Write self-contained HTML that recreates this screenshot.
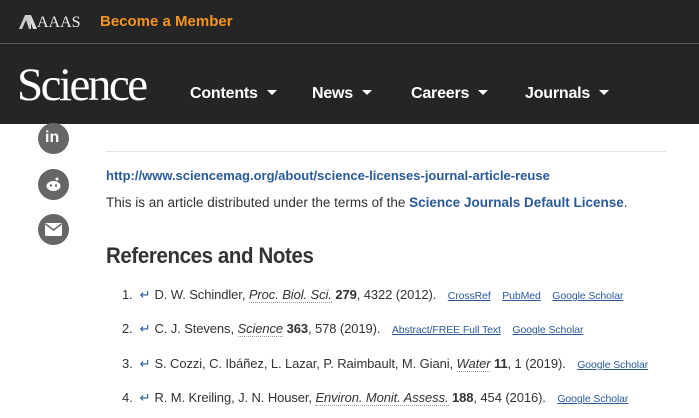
<!DOCTYPE html>
<html><head><meta charset="utf-8"><style>
body{margin:0;width:699px;height:418px;overflow:hidden;background:#fff;font-family:"Liberation Sans",sans-serif;position:relative}
.top{position:absolute;left:0;top:0;width:699px;height:43px;background:#252525;border-bottom:1px solid #5a5a5a}
.nav{position:absolute;left:0;top:44px;width:699px;height:80px;background:#252525}
.a{position:absolute;white-space:nowrap}
.ni{position:absolute;top:85px;color:#fff;font-weight:bold;font-size:16px;letter-spacing:-0.2px}
.ni:after{content:"";display:inline-block;margin-left:9px;border-left:5px solid transparent;border-right:5px solid transparent;border-top:5px solid #fff;vertical-align:3px}
.ic{position:absolute;left:38px;width:31px;height:31px;border-radius:50%;background:#666}
.ref{position:absolute;left:122px;font-size:13px;color:#333;white-space:nowrap;letter-spacing:-0.1px}
.ref i{border-bottom:1px dotted #999}
.ref a{color:#2a5a9a;font-size:10.5px;text-decoration:underline;margin-left:8px}
.ref .ar{color:#2a5a9a;margin:0 4px 0 7px}
</style></head><body>
<div class="top"></div><div class="nav"></div>
<svg class="a" style="left:19px;top:15px" width="18" height="14"><polygon points="0,14 6,0 12,0 12,14 10,14 7,5 3,14" fill="#ccc"/><polygon points="12,0 18,14 14,14 12,8" fill="#ddd"/></svg>
<div class="a" style="left:37px;top:14px;color:#eee;font-family:'Liberation Serif',serif;font-size:16px">AAAS</div>
<div class="a" style="left:100px;top:13px;color:#f7941d;font-weight:bold;font-size:15px">Become a Member</div>
<div class="a" style="left:17px;top:58px;color:#fff;font-family:'Liberation Serif',serif;font-size:47px;letter-spacing:-2.5px">Science</div>
<div class="ni" style="left:190px">Contents</div>
<div class="ni" style="left:312px">News</div>
<div class="ni" style="left:411px">Careers</div>
<div class="ni" style="left:525px">Journals</div>
<div class="ic" style="top:123px"><div class="a" style="left:7px;top:6px;color:#fff;font-weight:bold;font-size:16px">in</div></div>
<div class="ic" style="top:169px"><svg class="a" style="left:7px;top:8px" width="17" height="15"><ellipse cx="8.5" cy="9" rx="7" ry="5" fill="#fff"/><circle cx="6" cy="8.5" r="1.2" fill="#666"/><circle cx="11" cy="8.5" r="1.2" fill="#666"/><circle cx="12" cy="2" r="1.5" fill="#fff"/></svg></div>
<div class="ic" style="top:214px"><svg class="a" style="left:7px;top:9px" width="17" height="13"><rect x="0" y="0" width="17" height="13" rx="1.5" fill="#fff"/><polyline points="0.5,1 8.5,7 16.5,1" fill="none" stroke="#666" stroke-width="1.5"/></svg></div>
<div class="a" style="left:106px;top:151px;width:560px;height:1px;background:#e2e2e2"></div>
<div class="a" style="left:106px;top:168px;color:#2a5a9a;font-weight:bold;font-size:13px">http://www.sciencemag.org/about/science-licenses-journal-article-reuse</div>
<div class="a" style="left:106px;top:195px;color:#333;font-size:13.5px">This is an article distributed under the terms of the <b style="color:#2a5a9a">Science Journals Default License</b>.</div>
<div class="a" style="left:106px;top:243px;color:#333;font-weight:bold;font-size:22px;letter-spacing:-0.4px;transform:scaleX(0.93);transform-origin:0 0">References and Notes</div>
<div class="ref" style="top:287px">1.<span class="ar">↵</span>D. W. Schindler, <i>Proc. Biol. Sci.</i> <b>279</b>, 4322 (2012). <a>CrossRef</a> <a>PubMed</a> <a>Google Scholar</a></div>
<div class="ref" style="top:321px">2.<span class="ar">↵</span>C. J. Stevens, <i>Science</i> <b>363</b>, 578 (2019). <a>Abstract/FREE Full Text</a> <a>Google Scholar</a></div>
<div class="ref" style="top:356px">3.<span class="ar">↵</span>S. Cozzi, C. Ibáñez, L. Lazar, P. Raimbault, M. Giani, <i>Water</i> <b>11</b>, 1 (2019). <a>Google Scholar</a></div>
<div class="ref" style="top:390px">4.<span class="ar">↵</span>R. M. Kreiling, J. N. Houser, <i>Environ. Monit. Assess.</i> <b>188</b>, 454 (2016). <a>Google Scholar</a></div>
</body></html>
